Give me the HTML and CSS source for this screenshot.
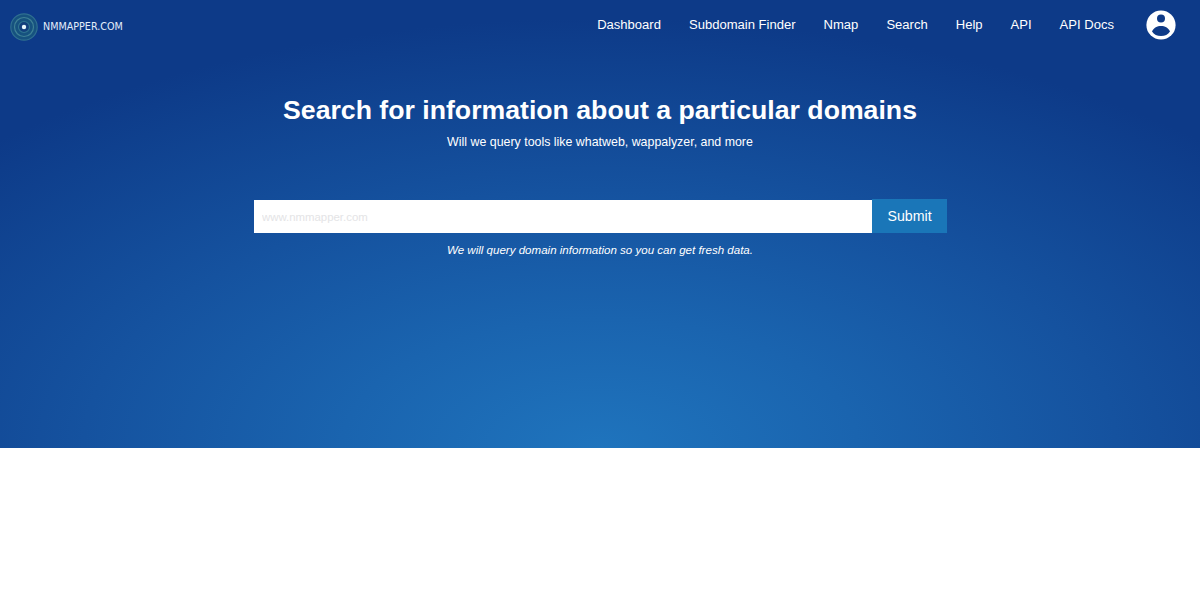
FILE: index.html
```html
<!DOCTYPE html>
<html lang="en">
<head>
<meta charset="utf-8">
<title>NMMAPPER.COM</title>
<link rel="stylesheet" href="styles.css">
</head>
<body>
<section class="hero">
  <header class="topbar">
    <a class="brand" href="#">
      <svg class="brand-logo" width="28" height="28" viewBox="0 0 28 28" aria-hidden="true">
        <circle cx="14" cy="14" r="13.2" fill="#16527f" stroke="#2f6f90" stroke-width="1.2"/>
        <circle cx="14" cy="14" r="9.5" fill="none" stroke="#3f8196" stroke-width="1.2"/>
        <circle cx="14" cy="14" r="5.5" fill="#123f7c" stroke="#2f7590" stroke-width="1.2"/>
        <circle cx="14" cy="14" r="2.2" fill="#e8f6fb"/>
      </svg>
      <span class="brand-name">NMMAPPER.COM</span>
    </a>
    <nav class="nav">
      <a href="#">Dashboard</a>
      <a href="#">Subdomain Finder</a>
      <a href="#">Nmap</a>
      <a href="#">Search</a>
      <a href="#">Help</a>
      <a href="#">API</a>
      <a href="#">API Docs</a>
    </nav>
    <svg class="avatar" width="30" height="30" viewBox="0 0 30 30" aria-hidden="true">
      <circle cx="15" cy="15" r="14.6" fill="#fff"/>
      <circle cx="15" cy="8.6" r="4" fill="#0e3a87"/>
      <path d="M6 21.5C8 17.5 11 16 15 16s7 1.500 9 5.500C22 24.800 19 26 15 26s-7-1.200-9-4.500z" fill="#0e3a87"/>
    </svg>
  </header>
  <div class="intro">
    <h1>Search for information about a particular domains</h1>
    <p class="lead">Will we query tools like whatweb, wappalyzer, and more</p>
  </div>
  <form class="search">
    <input class="search-input" type="text" placeholder="www.nmmapper.com">
    <button class="search-btn" type="button">Submit</button>
  </form>
  <p class="note">We will query domain information so you can get fresh data.</p>
</section>
</body>
</html>
```
FILE: styles.css
```css
* { box-sizing: border-box; }
html, body { margin: 0; padding: 0; }
body {
  background: #fff;
  font-family: "Liberation Sans", Arial, sans-serif;
  height: 608px;
  overflow: hidden;
}
.hero {
  height: 448px;
  display: flex;
  flex-direction: column;
  align-items: center;
  color: #fff;
  background: radial-gradient(ellipse 860px 430px at 50% 100%, #1f74bd 0%, #1a64af 30%, #15529f 60%, #0d3a88 100%);
  background-color: #0d3a88;
}
.topbar {
  width: 100%;
  height: 50px;
  display: flex;
  align-items: center;
  padding: 0 24px 0 10px;
}
.brand {
  display: flex;
  align-items: center;
  gap: 5px;
  color: #e4eefa;
  text-decoration: none;
  margin-top: 3px;
}
.brand-name {
  font-family: "DejaVu Sans", sans-serif;
  font-size: 9.6px;
}
.nav {
  margin-left: auto;
  margin-top: -2px;
  display: flex;
  gap: 28px;
  font-size: 13.05px;
}
.nav a { color: #fff; text-decoration: none; }
.avatar { margin-left: 32px; }
.intro { text-align: center; margin-top: 44px; }
h1 {
  margin: 0;
  font-size: 26.67px;
  line-height: 32px;
  font-weight: 700;
}
.lead {
  margin: 8px 0 0;
  font-size: 12.4px;
  line-height: 16px;
}
.search {
  width: 693px;
  height: 34px;
  margin-top: 49px;
  margin-left: 1px;
  display: flex;
}
.search-input {
  flex: 1;
  min-width: 0;
  height: 33px;
  margin-top: 1px;
  border: 0;
  padding: 0 8px;
  background: #fff;
  font: 11.4px "Liberation Sans", Arial, sans-serif;
  outline: none;
}
.search-input::placeholder { color: #e4e4e6; opacity: 1; }
.search-btn {
  width: 75px;
  height: 34px;
  border: 0;
  padding: 0;
  color: #fff;
  background: #1a76b8;
  font: 14.2px "Liberation Sans", Arial, sans-serif;
}
.note {
  margin: 10px 0 0;
  font-size: 11.55px;
  line-height: 14px;
  font-style: italic;
}
```
